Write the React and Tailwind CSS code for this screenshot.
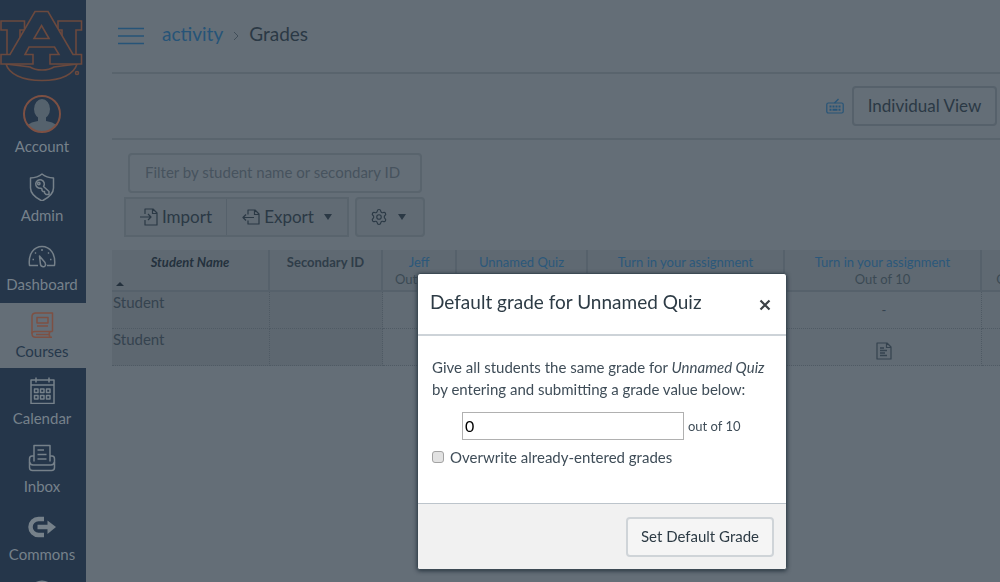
import { Settings } from "lucide-react";

const Icon = ({ children, className = "w-7 h-7", box = "0 0 28 28" }) => (
  <svg
    viewBox={box}
    className={className}
    fill="none"
    stroke="currentColor"
    strokeWidth="1.5"
    strokeLinejoin="round"
    aria-hidden="true"
  >
    {children}
  </svg>
);

const AdminIcon = () => (
  <Icon>
    <path d="M14 1 C17 3.5 21 4.8 25.5 5 V15 C25.5 21 20 25 14 28 C8 25 2.5 21 2.5 15 V5 C7 4.8 11 3.500 14 1Z" />
    <path d="M15.500 13.500 L21 18.500 V21.500 H18 L16.500 20 V18.500 H15 L14 17.500 V16.200 L12.800 15.200 A4.300 4.300 0 1 1 15.500 13.500Z" />
    <circle cx="10.800" cy="10.500" r="1.200" />
  </Icon>
);

const DashboardIcon = () => (
  <Icon>
    <path d="M10 23.500 H1.500 C0 12 6 4.500 14 4.500 S28 12 26.500 23.500 H19" />
    <path d="M11.500 14 L17 20.500 C18.500 23.500 16.500 25 15 24.700 C13 24.500 12.300 22.500 12.300 21Z" />
    <path d="M4.500 17.500 h1.500 M7 10.500 l1 1 M14 7 v2 M21 10.500 l-1 1 M22 17.500 h1.500" />
  </Icon>
);

const CoursesIcon = () => (
  <Icon>
    <path d="M24.500 20.500 V2 H8 C5 2 4 3.500 4 5.500 V22.500 C4 25 5 26.300 7.500 26.300 H24" />
    <path d="M4 22.500 C4 21 5 20.500 7 20.500 H24.500 M8 23.400 H22 M22 20.500 C21 22 21 24.500 22 26.300" />
    <path d="M9 6.500 H20 V12 H9Z M9 15 H20" />
  </Icon>
);

const CalendarIcon = () => (
  <Icon>
    <path d="M3 4 H26 V27.500 H3Z M3 9 H26 M8 1.500 V6.500 M21 1.500 V6.500" />
    <path d="M6.500 13 h3.500 v3.500 h-3.500z M12.500 13 h3.500 v3.500 h-3.500z M18.500 13 h3.500 v3.500 h-3.500z M6.500 19.500 h3.500 v3.500 h-3.500z M12.500 19.500 h3.500 v3.500 h-3.500z M18.500 19.500 h3.500 v3.500 h-3.500z" />
  </Icon>
);

const InboxIcon = () => (
  <Icon>
    <path d="M6 17.500 V1.500 H22 V17.500 M9.500 6 H16 M9.500 10.500 H18.500 M9.500 15 H18.500" />
    <path d="M6 12 H4 C2.500 12 1.500 13 1.500 15 V23.500 C1.500 25.500 2.500 26.500 4.500 26.500 H23.500 C25.500 26.500 26.500 25.500 26.500 23.500 V15 C26.500 13 25.500 12 24 12 H22" />
    <path d="M1.500 18 C2 20.300 3 21 5 21 H23 C25 21 26 20.300 26.500 18" />
  </Icon>
);

const CommonsIcon = () => (
  <Icon>
    <path
      d="M16 7 H10.500 A7.500 7.500 0 0 0 10.500 23 H16"
      strokeWidth="4.500"
    />
    <path d="M9.500 15 H20" strokeWidth="4.500" />
    <path d="M19.500 8.500 L28 15 L19.500 22Z" fill="currentColor" stroke="none" />
  </Icon>
);

const HelpIcon = () => (
  <Icon>
    <circle cx="14" cy="14" r="12" strokeWidth="3" />
  </Icon>
);

const navItems = [
  { label: "Admin", icon: AdminIcon, style: "h-[69px] gap-1 text-[#76818a]" },
  { label: "Dashboard", icon: DashboardIcon, style: "h-[69px] gap-1 text-[#76818a]" },
  {
    label: "Courses",
    icon: CoursesIcon,
    style: "h-[65px] gap-0.5 bg-[#646e77] text-[#26384b]",
    iconStyle: "text-[#7d5043]",
  },
  { label: "Calendar", icon: CalendarIcon, style: "h-[68px] gap-1 text-[#76818a]" },
  { label: "Inbox", icon: InboxIcon, style: "h-[68px] gap-1 text-[#76818a]" },
  { label: "Commons", icon: CommonsIcon, style: "h-[68px] gap-1 text-[#76818a]" },
];

const Sidebar = () => (
  <nav className="w-[86px] shrink-0 bg-[#25364a] overflow-hidden">
    <a href="#home" aria-label="Home" className="block h-[90px] pt-2">
      <svg
        viewBox="0 8 86 76"
        className="w-[86px] h-[76px]"
        fill="#25364a"
        stroke="#6b493e"
        strokeWidth="1.600"
      >
        <path d="M6 64 C9 74 22 80.500 42 80.500 S74 74 77 64 L54 67 C48 71 36 71 30 67Z" />
        <path d="M1 21 H24.500 V30 H20 V56 H7 V30 H1Z" />
        <path d="M58 21 H81.500 V30 H76 V56 H62 V30 H58Z" />
        <path d="M35 11.500 H48 L73 54.500 H81.500 V64 H50 V54.500 H59 L54.500 47 H29 L25 54.500 H33 V64 H1 V54.500 H10Z" />
        <path d="M41.500 25.500 L49 38.500 H34Z" />
        <circle cx="77" cy="73" r="1.500" />
      </svg>
    </a>

    <a
      href="#account"
      className="flex flex-col items-center h-[75px] pt-1 pr-0.5 gap-0.5 text-[15px] leading-5 text-[#76818a]"
    >
      <svg viewBox="0 0 40 40" className="w-10 h-10 shrink-0" aria-hidden="true">
        <clipPath id="avatar">
          <circle cx="20" cy="20" r="18" />
        </clipPath>
        <g clipPath="url(#avatar)" fill="#55626d">
          <ellipse cx="20" cy="15" rx="8" ry="10" />
          <path d="M16 22 H24 V27 C30 28 35 30 36 34 V40 H4 V34 C5 30 10 28 16 27Z" />
        </g>
        <circle cx="20" cy="20" r="18" fill="none" stroke="#7d5043" strokeWidth="2" />
      </svg>
      Account
    </a>

    {navItems.map(({ label, icon: NavIcon, style, iconStyle }) => (
      <a
        key={label}
        href={`#${label.toLowerCase()}`}
        className={`flex flex-col items-center pt-2 pr-0.5 text-[15px] leading-5 ${style}`}
      >
        <span className={iconStyle}>
          <NavIcon />
        </span>
        {label}
      </a>
    ))}

    <a
      href="#help"
      aria-label="Help"
      className="flex flex-col items-center pt-2 pr-0.5 text-[#76818a]"
    >
      <HelpIcon />
    </a>
  </nav>
);

const columns = [
  { title: "Jeff", points: "Out of 5", width: "w-[74px]", cells: ["", ""] },
  { title: "Unnamed Quiz", points: "Out of 10", width: "w-[131px]", cells: ["", ""] },
  { title: "Turn in your assignment", points: "Out of 10", width: "w-[197px]", cells: ["", ""] },
  { title: "Turn in your assignment", points: "Out of 10", width: "w-[197px]", cells: ["-", "doc"] },
  { title: "", points: "Out of 10", width: "w-[86px]", cells: ["", ""] },
];

const DocIcon = () => (
  <Icon box="0 0 16 18" className="w-4 h-[18px] inline-block mt-2">
    <path d="M1 1 H11 L15 5 V17 H1Z M10.500 1 V5.500 H15" strokeWidth="1.200" />
    <path d="M4 6 H8 M4 8.500 H11 M4 11 H9 M4 13.500 H11" strokeWidth="1.300" />
  </Icon>
);

const Gradebook = () => (
  <div className="overflow-hidden">
    <table className="table-fixed w-[956px] border-separate border-spacing-0 text-[13px] leading-[17px] text-[#35434f]">
      <thead>
        <tr className="h-[42px] bg-[#5f6972] align-top">
          <th className="w-[158px] p-0 pt-1 border-r-2 border-b-2 border-[#56616b] italic font-bold text-[#24313d]">
            Student Name
            <svg viewBox="0 0 8 4" className="w-2 h-1 ml-1 mt-[11px]" fill="currentColor">
              <path d="M0 4 L4 0 L8 4Z" />
            </svg>
          </th>
          <th className="w-[113px] p-0 pt-1 border-r-2 border-b-2 border-[#56616b] font-bold text-[#2f3d49]">
            Secondary ID
          </th>
          {columns.map((col, i) => (
            <th
              key={i}
              className={`${col.width} p-0 pt-1 border-r-2 border-b-2 border-[#56616b] font-normal whitespace-nowrap`}
            >
              <a href="#assignment" className="block h-[17px] text-[#2b587b]">
                {col.title}
              </a>
              <span className="text-[#3b4954]">{col.points}</span>
            </th>
          ))}
        </tr>
      </thead>
      <tbody>
        {[0, 1].map((row) => (
          <tr key={row} className="h-[37px] align-top">
            <td className="p-0 pl-px bg-[#5d6770] border-r border-b border-dotted border-[#4f5a64] text-[15px] leading-5">
              Student
            </td>
            <td className="bg-[#5d6770] border-r border-b border-dotted border-[#4f5a64]" />
            {columns.map((col, i) => (
              <td
                key={i}
                className="p-0 pl-0.5 bg-[#616b74] border-r border-b border-dotted border-[#4f5a64] text-center align-middle"
              >
                {col.cells[row] === "doc" ? <DocIcon /> : col.cells[row]}
              </td>
            ))}
          </tr>
        ))}
      </tbody>
    </table>
  </div>
);

const ImportIcon = () => (
  <Icon box="0 0 18 18" className="w-[18px] h-[18px]">
    <path d="M5 6 V1 H13 L17 5 V17 H5 V12 M12.500 1 V5.500 H17 M0 9 H11 M8 6 L11 9 L8 12" strokeWidth="1.200" />
  </Icon>
);

const ExportIcon = () => (
  <Icon box="0 0 18 18" className="w-[18px] h-[18px]">
    <path d="M6 6.500 V2 H13 L17 6 V16 H6 V12.500 M12.500 2 V6.500 H17 M1 9.500 H12 M4 6.500 L1 9.500 L4 12.500" strokeWidth="1.200" />
  </Icon>
);

const Caret = () => (
  <svg viewBox="0 0 8 6" className="w-2 h-1.5" fill="currentColor" aria-hidden="true">
    <path d="M0 0 H8 L4 6Z" />
  </svg>
);

const Toolbar = () => (
  <div className="pl-3 pt-[13px] pb-[13px]">
    <input
      type="text"
      aria-label="Filter by student name or secondary ID"
      placeholder="Filter by student name or secondary ID"
      className="block ml-1 w-[294px] h-10 px-[15px] pb-0.5 border-2 border-[#59646d] rounded-sm text-[15px] placeholder:text-[#47535e]"
    />
    <div className="flex gap-[6px] mt-1 text-[#2b3945]">
      <div className="flex h-10 border-2 border-[#59646d] bg-[#616b74] text-[17px]">
        <button className="flex items-center gap-1 w-[101px] justify-center border-r border-[#56616b]">
          <ImportIcon />
          Import
        </button>
        <button className="flex items-center gap-1 w-[120px] justify-center">
          <ExportIcon />
          Export
          <span className="ml-1.5">
            <Caret />
          </span>
        </button>
      </div>
      <button
        aria-label="Gradebook settings"
        className="flex items-center justify-center gap-2.5 w-[70px] h-10 pr-1 border-2 border-[#59646d] bg-[#616b74] rounded-sm"
      >
        <Settings size={18} strokeWidth={1.5} />
        <Caret />
      </button>
    </div>
  </div>
);

const GradeDialog = () => (
  <div className="fixed inset-0 flex items-end justify-end pr-[213px] pb-3">
    <div
      role="dialog"
      aria-labelledby="dialog-title"
      className="w-[370px] bg-white border border-[#3d4a54] rounded-[3px] overflow-hidden shadow-[0_1px_4px_#26333d]"
    >
      <div className="flex items-center justify-between h-[62px] pl-3 pr-[15px] border-b-2 border-[#cdd3d8]">
        <h2 id="dialog-title" className="pb-1 text-[19px] text-[#2d3b45]">
          Default grade for Unnamed Quiz
        </h2>
        <button aria-label="Close" className="pt-0.5 text-[#3c4146]">
          <svg viewBox="0 0 12 12" className="w-3 h-3" stroke="currentColor" strokeWidth="2.200">
            <path d="M1.500 1.500 L10.500 10.500 M10.500 1.500 L1.500 10.500" />
          </svg>
        </button>
      </div>

      <div className="h-[167px] px-3.5 pt-5 text-[15px] leading-[22px] text-[#3f4d58]">
        <p>
          Give all students the same grade for <em>Unnamed Quiz</em> by entering
          and submitting a grade value below:
        </p>
        <div className="flex items-center gap-1 pl-[30px] mt-3 text-[13px]">
          <input
            id="grade"
            type="text"
            defaultValue="0"
            className="w-[222px] h-7 px-0.5 pb-0.5 border border-[#b0b0b0] text-base text-black"
          />
          <label htmlFor="grade">out of 10</label>
        </div>
        <div className="flex items-center gap-1.5 mt-1.5">
          <input
            id="overwrite"
            type="checkbox"
            className="appearance-none w-3 h-3 border border-[#a3a3a3] rounded-[3px] bg-[#e2e2e2]"
          />
          <label htmlFor="overwrite">Overwrite already-entered grades</label>
        </div>
      </div>

      <div className="flex items-center justify-end h-[66px] pr-3 border-t border-[#bcc4cb] bg-[#f1f1f1]">
        <button className="w-[148px] h-10 border-2 border-[#cfd4d8] rounded-sm bg-[#f5f5f5] text-[15px] text-[#2d3b45]">
          Set Default Grade
        </button>
      </div>
    </div>
  </div>
);

const App = () => (
  <div className="flex h-screen overflow-hidden bg-[#646e77] font-[Lato,sans-serif]">
    <Sidebar />

    <main className="flex-1 min-w-0 pl-[26px]">
      <header className="flex items-center h-[74px] pl-1.5 border-b-2 border-[#59646d] text-[19px]">
        <button aria-label="Course menu" className="text-[#265478]">
          <svg viewBox="0 0 26 18" className="w-[26px] h-[18px]" stroke="currentColor" strokeWidth="1.500">
            <path d="M0 1.500 H26 M0 9 H26 M0 16.500 H26" />
          </svg>
        </button>
        <a href="#activity" className="ml-[18px] pb-1 text-[#265478]">
          activity
        </a>
        <svg viewBox="0 0 6 10" className="w-1.5 h-2.5 mx-[10px]" fill="none" stroke="#414e59">
          <path d="M1 1 L5 5 L1 9" />
        </svg>
        <h1 className="pb-1 text-[#2b3945]">Grades</h1>
      </header>

      <div className="flex items-center justify-end gap-2 h-[66px] pr-[3px] border-b-2 border-[#59646d]">
        <button aria-label="Keyboard shortcuts" className="text-[#265478]">
          <Icon box="0 0 18 16" className="w-[18px] h-4">
            <rect x="0.800" y="5" width="16.400" height="10" rx="1.500" strokeWidth="1.200" />
            <path d="M8.500 5 L12.500 1" strokeWidth="1.200" />
            <path d="M3.500 8.500 H15" strokeDasharray="2 1" strokeWidth="2" />
            <path d="M3.500 11.800 H5.500 M6.500 11.800 H11.500 M12.500 11.800 H14.500" strokeWidth="2" />
          </Icon>
        </button>
        <button className="w-[145px] h-10 border-2 border-[#56616b] rounded-sm text-[17px] text-[#2b3945]">
          Individual View
        </button>
      </div>

      <Toolbar />
      <Gradebook />
    </main>

    <GradeDialog />
  </div>
);

export default App;
